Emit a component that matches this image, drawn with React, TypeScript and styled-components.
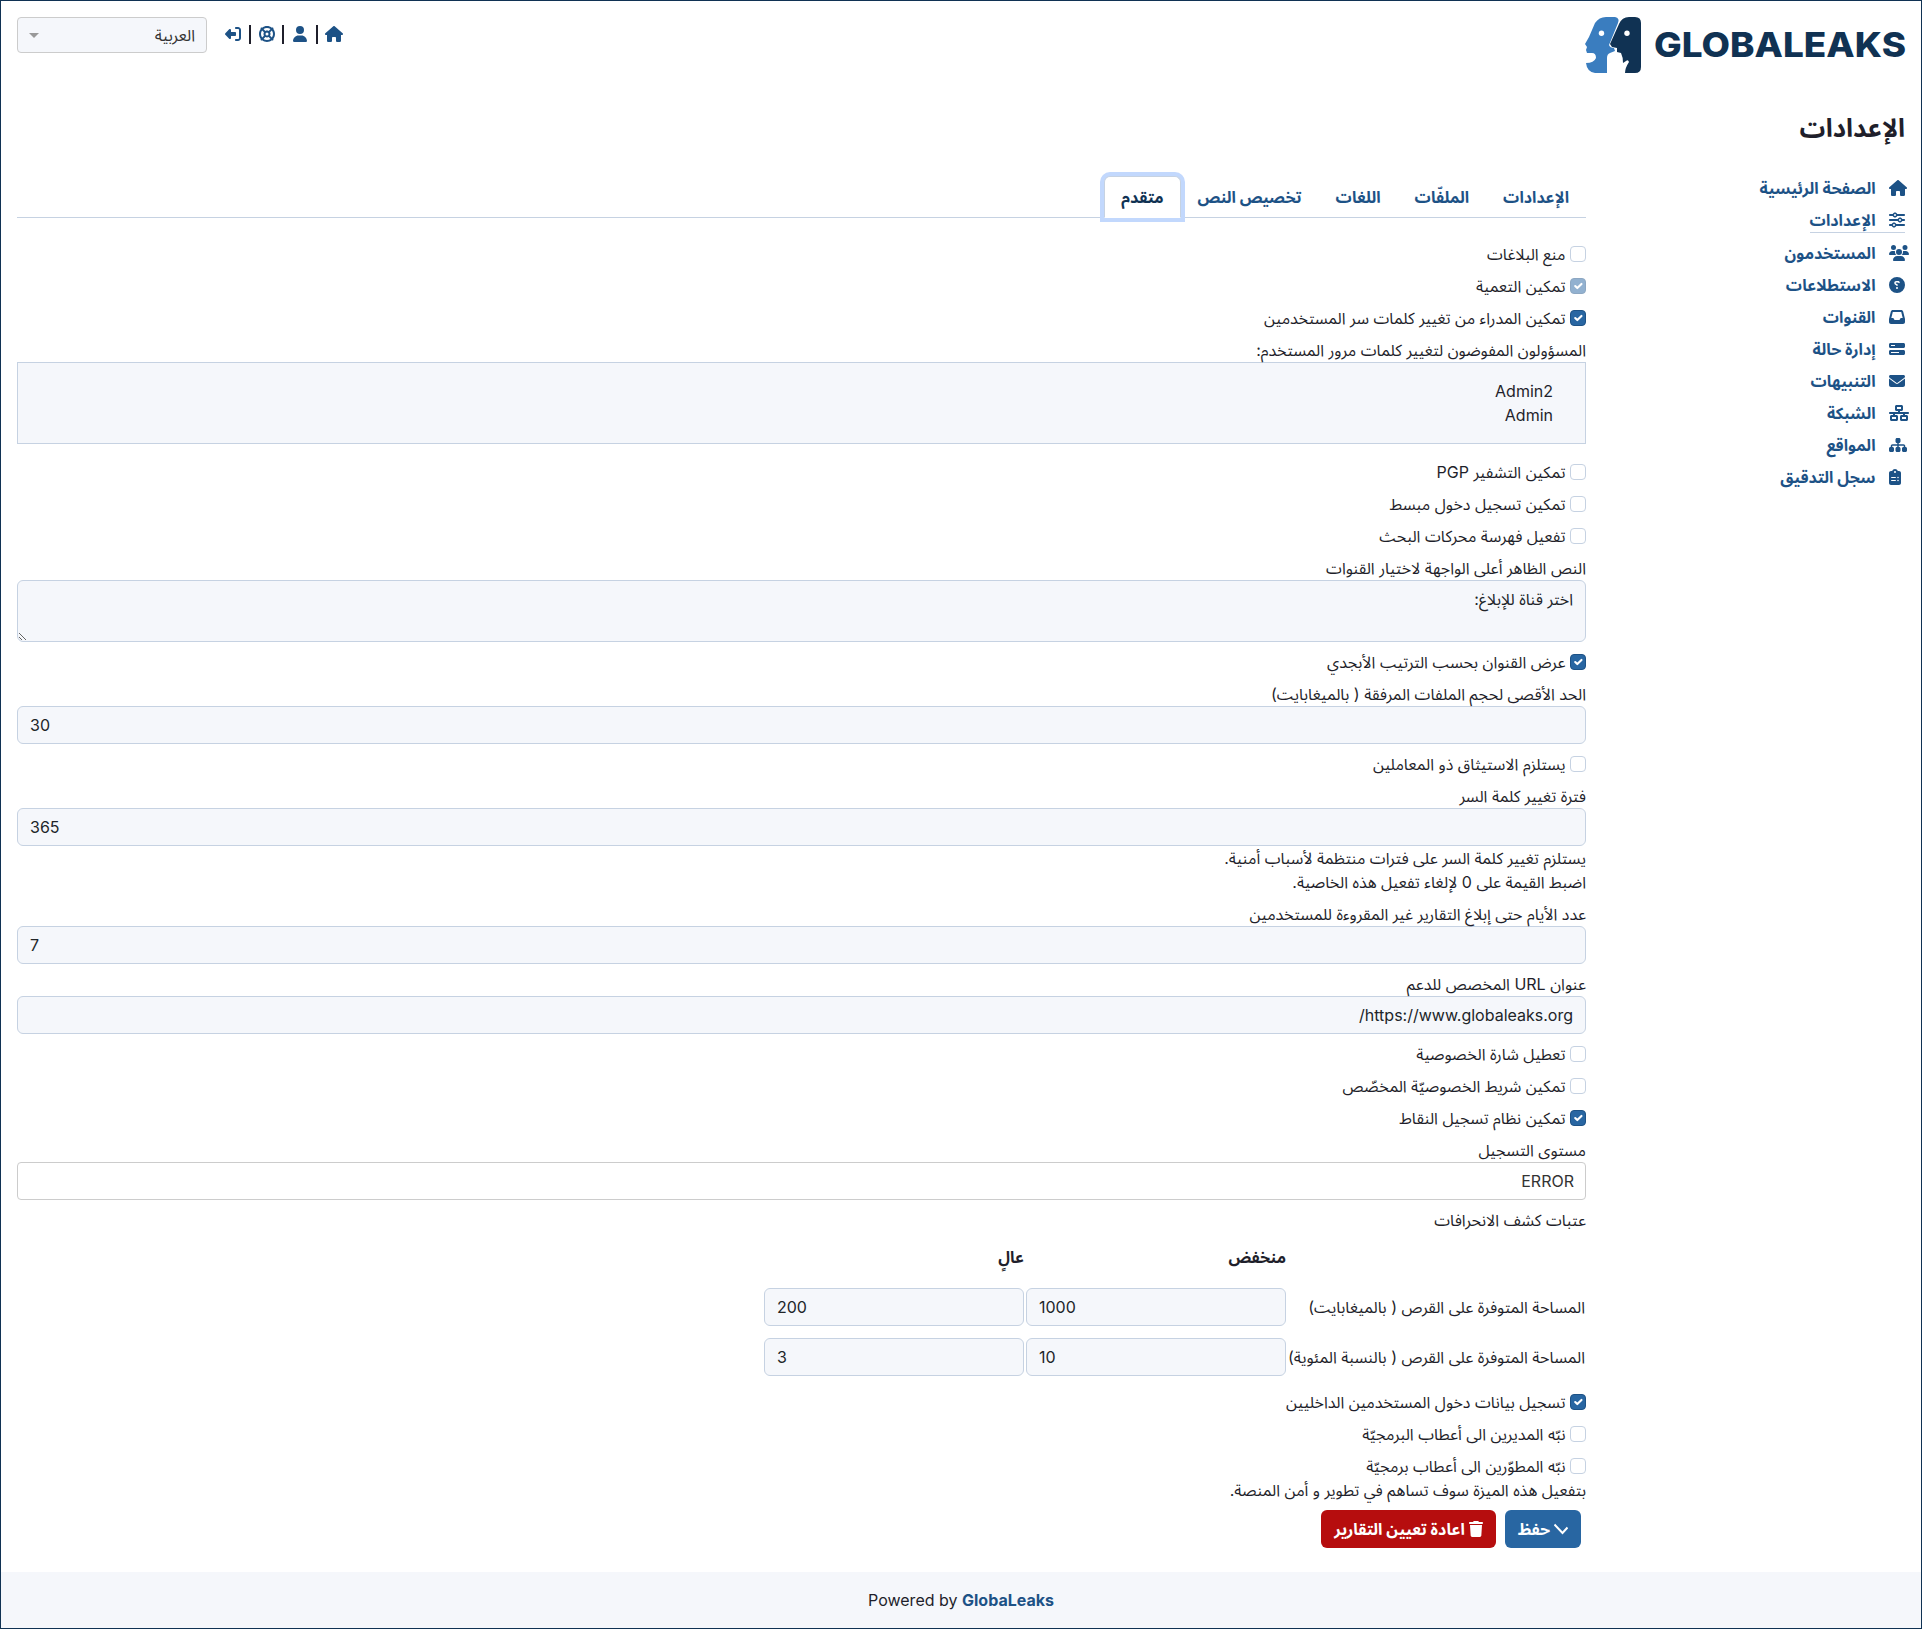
import React from "react";
import styled, { createGlobalStyle, css } from "styled-components";
import {
  FaHouse, FaSliders, FaUsers, FaCircleQuestion, FaInbox, FaBarsProgress, FaEnvelope,
  FaNetworkWired, FaSitemap, FaClipboardList, FaUser, FaLifeRing, FaRightFromBracket, FaTrash,
} from "react-icons/fa6";

const ink = "#1f1f2b";
const link = "#1d5286";
const navy = "#103253";
const line = "#c6d2e2";
const panel = "#f5f7fb";

const GlobalStyle = createGlobalStyle`
  *, *::before, *::after { box-sizing: border-box; }
  body {
    margin: 0;
    background: #fff;
    color: ${ink};
    font-family: Inter, "Noto Sans Arabic", "Noto Sans", sans-serif;
    font-size: 16px;
    line-height: 24px;
  }
`;

const Page = styled.div`
  display: flex;
  flex-direction: column;
  height: 1629px;
  border: 1px solid ${navy};
`;
const Header = styled.header`
  display: flex;
  justify-content: space-between;
  align-items: flex-start;
  height: 89px;
  padding: 16px 16px 0;
`;
const Logo = styled.svg`
  display: block;
  width: 320px;
  height: 56px;
  overflow: visible;
`;
const HeaderTools = styled.div`
  display: flex;
  align-items: flex-start;
`;
const QuickLinks = styled.div`
  display: flex;
  align-items: center;
  height: 34px;
  margin-left: 18px;
  color: ${link};
`;
const QuickIcon = styled.span<{ $w: number; $flip?: boolean }>`
  display: flex;
  width: ${(p) => p.$w}px;
  svg { flex: none; width: ${(p) => p.$w}px; height: 16px; }
  ${(p) => p.$flip && css`transform: scaleX(-1);`}
`;
const Divider = styled.span<{ $before: number; $after: number }>`
  width: 2px;
  height: 19px;
  margin-right: ${(p) => p.$before}px;
  margin-left: ${(p) => p.$after}px;
  background: ${ink};
`;
const LanguageSelect = styled.div`
  display: flex;
  align-items: center;
  justify-content: space-between;
  width: 190px;
  height: 36px;
  padding: 0 11px;
  border: 1px solid #ccc;
  border-radius: 4px;
  background: ${panel};
  color: #333;
`;
const Caret = styled.span`
  border: 5px solid transparent;
  border-top-color: #999;
  border-bottom-width: 0;
`;
const Body = styled.div`
  display: flex;
  flex: 1;
  padding: 0 16px;
`;
const Sidebar = styled.aside`
  width: 319px;
`;
const Title = styled.h1`
  margin: 22px 0 0;
  font-size: 25.6px;
  line-height: 32px;
  font-weight: 700;
`;
const Nav = styled.nav`
  display: flex;
  flex-direction: column;
  align-items: flex-start;
  gap: 8px;
  margin-top: 32px;
`;
const NavItem = styled.a<{ $active?: boolean }>`
  display: flex;
  align-items: center;
  gap: 13.5px;
  color: ${link};
  font-weight: 700;
  ${(p) => p.$active && css`border-bottom: 1px solid ${line};`}
`;
const NavIcon = styled.span<{ $w: number; $flip?: boolean }>`
  display: flex;
  direction: ltr;
  width: 16px;
  svg {
    flex: none;
    width: ${(p) => p.$w}px;
    height: 16px;
    ${(p) => p.$flip && css`transform: scaleX(-1);`}
  }
`;
const Main = styled.main`
  width: 1569px;
  padding-top: 86px;
`;
const Tabs = styled.div`
  display: flex;
  height: 42px;
  margin-bottom: 24px;
  border-bottom: 1px solid ${line};
`;
const Tab = styled.div<{ $active?: boolean }>`
  height: 42px;
  padding: 8px 16px;
  border: 1px solid transparent;
  border-radius: 6px 6px 0 0;
  color: ${link};
  font-weight: 700;
  ${(p) => p.$active && css`
    border-color: ${line} ${line} #fff;
    background: #fff;
    color: ${navy};
    box-shadow: 0 0 0 4px #c2d8fd;
  `}
`;
const Field = styled.div<{ $after?: number }>`
  margin-bottom: ${(p) => p.$after ?? 8}px;
`;
const CheckLabel = styled.label`
  display: flex;
  gap: 4.5px;
`;
const CheckBox = styled.span<{ $on?: boolean; $muted?: boolean }>`
  display: flex;
  width: 16px;
  height: 16px;
  margin-top: 4px;
  border: 1px solid ${(p) => (p.$on ? "#1d5286" : line)};
  border-radius: 4px;
  background: ${(p) => (p.$on ? "#2866a2" : "#fff")};
  opacity: ${(p) => (p.$muted ? 0.5 : 1)};
`;
const Text = styled.div`
  white-space: nowrap;
`;
const Input = styled.div<{ $number?: boolean }>`
  height: 38px;
  padding: 6px 12px;
  border: 1px solid ${line};
  border-radius: 6px;
  background: ${panel};
  color: #212529;
  text-align: ${(p) => (p.$number ? "left" : "right")};
`;
const Area = styled.textarea`
  display: block;
  width: 100%;
  height: 62px;
  padding: 6px 12px;
  border: 1px solid ${line};
  border-radius: 6px;
  background: ${panel};
  color: #212529;
  font: inherit;
  outline: none;
`;
const Select = styled(Input)`
  padding: 6px 11px;
  border-color: #ccc;
  border-radius: 4px;
  background: #fff;
  color: #333;
`;
const UserList = styled.div`
  height: 82px;
  padding: 16px 32px;
  border: 1px solid ${line};
  background: ${panel};
`;
const Thresholds = styled.div`
  display: grid;
  grid-template-columns: 297px 260px 260px;
  grid-template-rows: 44px 38px 38px;
  gap: 12px 2px;
  align-items: center;
  margin-bottom: 14px;
  padding: 0 1px;
`;
const Heading = styled.div`
  padding-top: 6px;
  font-weight: 700;
`;
const Actions = styled.div`
  display: flex;
  gap: 9px;
  margin: 8px 5px 0;
`;
const Button = styled.button<{ $danger?: boolean }>`
  display: flex;
  align-items: center;
  justify-content: center;
  gap: 4px;
  width: ${(p) => (p.$danger ? 175 : 76)}px;
  height: 38px;
  padding: 0;
  border: 0;
  border-radius: 6px;
  background: ${(p) => (p.$danger ? "#b60d0e" : "#2866a2")};
  color: #fff;
  font: inherit;
  font-weight: 700;
  svg { flex: none; width: 14px; height: 16px; }
`;
const Footer = styled.footer`
  height: 56px;
  padding: 16px;
  background: ${panel};
  text-align: center;
  direction: ltr;
`;
const FooterLink = styled.a`
  color: ${link};
  font-weight: 700;
`;

function Check({ children, on, muted }: { children: string; on?: boolean; muted?: boolean }) {
  return (
    <CheckLabel>
      <CheckBox $on={on} $muted={muted}>
        {on && (
          <svg width="14" height="14" viewBox="0 0 20 20" fill="none" stroke="#fff" strokeWidth="3" strokeLinecap="round" strokeLinejoin="round">
            <path d="m6 10 3 3 6-6" />
          </svg>
        )}
      </CheckBox>
      {children}
    </CheckLabel>
  );
}

function BrandLogo() {
  return (
    <Logo viewBox="0 0 320 56" direction="ltr">
      <path fill="#3a7dbf" d="M21 0H30Q35 1 33 6L24 28Q25 31 29 31L30 34L25 36Q22 37 22 41V56H10Q2 55 1 46Q9 46 11 41Q11 36 7 36H2L1 33L2 30L0 27L4 20L10 6Q14 0 21 0Z" />
      <path fill={navy} d="M44 0H50Q56 0 56 6V50Q56 56 50 56H40Q40 51 44 45Q43 42 41 44L38 46Q38 40 36 36L32 35V31L27 30L25 27L34 7Q37 0 44 0Z" />
      <circle cx="16.5" cy="16.3" r="2.7" fill="#fff" />
      <circle cx="42" cy="16.3" r="2.7" fill="#fff" />
      <text x="69" y="40" fill={navy} fontFamily="Inter, sans-serif" fontSize="34" fontWeight="800" textLength="252" lengthAdjust="spacingAndGlyphs">GLOBALEAKS</text>
    </Logo>
  );
}

const navItems = [
  { label: "الصفحة الرئيسية", Icon: FaHouse, w: 18 },
  { label: "الإعدادات", Icon: FaSliders, w: 16, active: true },
  { label: "المستخدمون", Icon: FaUsers, w: 20 },
  { label: "الاستطلاعات", Icon: FaCircleQuestion, w: 16, flip: true },
  { label: "القنوات", Icon: FaInbox, w: 16 },
  { label: "إدارة حالة", Icon: FaBarsProgress, w: 16, flip: true },
  { label: "التنبيهات", Icon: FaEnvelope, w: 16 },
  { label: "الشبكة", Icon: FaNetworkWired, w: 20 },
  { label: "المواقع", Icon: FaSitemap, w: 18 },
  { label: "سجل التدقيق", Icon: FaClipboardList, w: 12, flip: true },
];
const tabs = ["الإعدادات", "الملفّات", "اللغات", "تخصيص النص", "متقدم"];

export default function App() {
  return (
    <Page dir="rtl">
      <GlobalStyle />
      <Header>
        <BrandLogo />
        <HeaderTools>
          <QuickLinks>
            <QuickIcon $w={18}><FaHouse /></QuickIcon>
            <Divider $before={7} $after={9} />
            <QuickIcon $w={14}><FaUser /></QuickIcon>
            <Divider $before={9} $after={7} />
            <QuickIcon $w={16}><FaLifeRing /></QuickIcon>
            <Divider $before={8} $after={8} />
            <QuickIcon $w={16} $flip><FaRightFromBracket /></QuickIcon>
          </QuickLinks>
          <LanguageSelect>العربية<Caret /></LanguageSelect>
        </HeaderTools>
      </Header>
      <Body>
        <Sidebar>
          <Title>الإعدادات</Title>
          <Nav>
            {navItems.map(({ label, Icon, w, active, flip }) => (
              <NavItem key={label} $active={active}>
                <NavIcon $w={w} $flip={flip}><Icon /></NavIcon>
                {label}
              </NavItem>
            ))}
          </Nav>
        </Sidebar>
        <Main>
          <Tabs>
            {tabs.map((t, i) => <Tab key={t} $active={i === tabs.length - 1}>{t}</Tab>)}
          </Tabs>
          <Field><Check>منع البلاغات</Check></Field>
          <Field><Check on muted>تمكين التعمية</Check></Field>
          <Field><Check on>تمكين المدراء من تغيير كلمات سر المستخدمين</Check></Field>
          <Field $after={16}>
            <Text>المسؤولون المفوضون لتغيير كلمات مرور المستخدم:</Text>
            <UserList><Text>Admin2</Text><Text>Admin</Text></UserList>
          </Field>
          <Field><Check>تمكين التشفير PGP</Check></Field>
          <Field><Check>تمكين تسجيل دخول مبسط</Check></Field>
          <Field><Check>تفعيل فهرسة محركات البحث</Check></Field>
          <Field>
            <Text>النص الظاهر أعلى الواجهة لاختيار القنوات</Text>
            <Area defaultValue="اختر قناة للإبلاغ:" />
          </Field>
          <Field><Check on>عرض القنوان بحسب الترتيب الأبجدي</Check></Field>
          <Field>
            <Text>الحد الأقصى لحجم الملفات المرفقة ( بالميغابايت)</Text>
            <Input $number>30</Input>
          </Field>
          <Field><Check>يستلزم الاستيثاق ذو المعاملين</Check></Field>
          <Field>
            <Text>فترة تغيير كلمة السر</Text>
            <Input $number>365</Input>
            <Text>يستلزم تغيير كلمة السر على فترات منتظمة لأسباب أمنية.</Text>
            <Text>اضبط القيمة على 0 لإلغاء تفعيل هذه الخاصية.</Text>
          </Field>
          <Field>
            <Text>عدد الأيام حتى إبلاغ التقارير غير المقروءة للمستخدمين</Text>
            <Input $number>7</Input>
          </Field>
          <Field>
            <Text>عنوان URL المخصص للدعم</Text>
            <Input>https://www.globaleaks.org/</Input>
          </Field>
          <Field><Check>تعطيل شارة الخصوصية</Check></Field>
          <Field><Check>تمكين شريط الخصوصيّة المخصّص</Check></Field>
          <Field><Check on>تمكين نظام تسجيل النقاط</Check></Field>
          <Field>
            <Text>مستوى التسجيل</Text>
            <Select>ERROR</Select>
          </Field>
          <Text>عتبات كشف الانحرافات</Text>
          <Thresholds>
            <span />
            <Heading>منخفض</Heading>
            <Heading>عالٍ</Heading>
            <Text>المساحة المتوفرة على القرص ( بالميغابايت)</Text>
            <Input $number>1000</Input>
            <Input $number>200</Input>
            <Text>المساحة المتوفرة على القرص ( بالنسبة المئوية)</Text>
            <Input $number>10</Input>
            <Input $number>3</Input>
          </Thresholds>
          <Field><Check on>تسجيل بيانات دخول المستخدمين الداخليين</Check></Field>
          <Field><Check>نبّه المديرين الى أعطاب البرمجيّة</Check></Field>
          <Check>نبّه المطوّرين الى أعطاب برمجيّة</Check>
          <Text>بتفعيل هذه الميزة سوف تساهم في تطوير و أمن المنصة.</Text>
          <Actions>
            <Button>
              <svg viewBox="0 0 14 16" fill="none" stroke="#fff" strokeWidth="2"><path d="M.5 3.5L8.5 12L13.5 6.5" /></svg>
              حفظ
            </Button>
            <Button $danger><FaTrash />اعادة تعيين التقارير</Button>
          </Actions>
        </Main>
      </Body>
      <Footer>Powered by <FooterLink>GlobaLeaks</FooterLink></Footer>
    </Page>
  );
}
